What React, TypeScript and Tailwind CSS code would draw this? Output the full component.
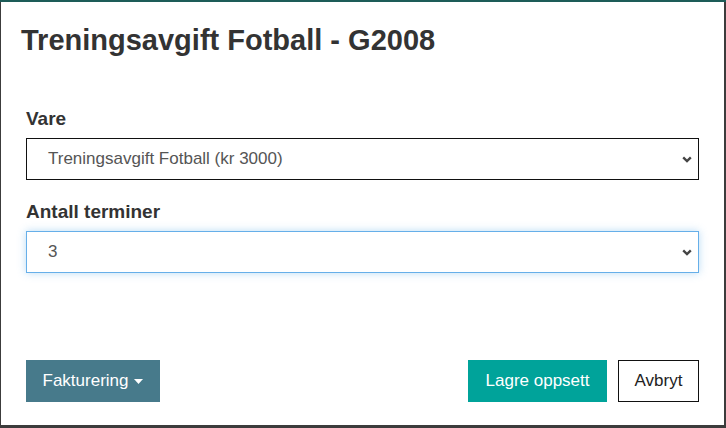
import { useState } from 'react';

function Chevron() {
  return (
    <svg width="10" height="7" viewBox="0 0 10 7" className="shrink-0">
      <path d="M1.2 1.4 L5 5 L8.8 1.4" fill="none" stroke="#444" strokeWidth="2.4" />
    </svg>
  );
}

function SelectBox({ value, focused }: { value: string; focused?: boolean }) {
  return (
    <div
      className={`flex h-[42px] items-center justify-between bg-white pl-[21px] pr-[6px] ${
        focused ? 'border border-[#66afe9] shadow-[0_0_8px_rgba(102,175,233,0.45)]' : 'border border-[#111]'
      }`}
    >
      <span className="text-[17px] text-[#555]">{value}</span>
      <Chevron />
    </div>
  );
}

export default function App() {
  const [vare] = useState('Treningsavgift Fotball (kr 3000)');
  const [terminer] = useState('3');

  return (
    <div className="h-[428px] w-[726px] bg-[#3c3c3c] border-t-2 border-[#1d5c58] pl-px pr-[2px] pb-[3px]">
      <div className="flex h-full flex-col bg-white font-['Liberation_Sans',Arial,sans-serif] text-[#333]">
        <div className="px-[20px] pt-[21px]">
          <h1 className="text-[29px] font-bold leading-[34px]">Treningsavgift Fotball - G2008</h1>
        </div>

        <div className="flex flex-col px-[25px] pt-[51px]">
          <label className="text-[19px] font-bold leading-[22px]">Vare</label>
          <div className="mt-[8px]">
            <SelectBox value={vare} />
          </div>
          <label className="mt-[21px] text-[19px] font-bold leading-[22px]">Antall terminer</label>
          <div className="mt-[8px]">
            <SelectBox value={terminer} focused />
          </div>
        </div>

        <div className="mt-auto mb-[23px] flex items-center justify-between px-[25px]">
          <button className="flex h-[42px] w-[134px] items-center justify-center gap-[6px] bg-[#477a8b] text-[17px] text-white">
            Fakturering
            <svg width="9" height="5" viewBox="0 0 9 5">
              <path d="M0 0 H9 L4.5 5 Z" fill="#fff" />
            </svg>
          </button>
          <div className="flex items-center gap-[11px]">
            <button className="h-[42px] w-[139px] bg-[#00a39a] text-[17px] text-white">Lagre oppsett</button>
            <button className="h-[42px] w-[81px] border border-[#111] bg-white text-[17px] text-[#222]">Avbryt</button>
          </div>
        </div>
      </div>
    </div>
  );
}
